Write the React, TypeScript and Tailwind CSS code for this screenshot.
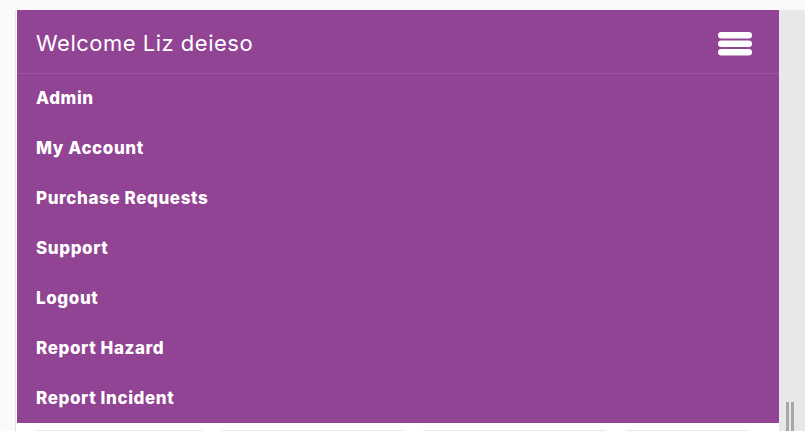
import React from "react";

const menuItems = [
  "Admin",
  "My Account",
  "Purchase Requests",
  "Support",
  "Logout",
  "Report Hazard",
  "Report Incident",
];

const BarsIcon = () => (
  <svg width="34" height="24" viewBox="0 0 34 24" fill="#ffffff">
    <rect x="0" y="0" width="34" height="6.5" rx="3.25" />
    <rect x="0" y="8.5" width="34" height="6.5" rx="3.25" />
    <rect x="0" y="17" width="34" height="6.5" rx="3.25" />
  </svg>
);

const App = () => {
  return (
    <div
      className="flex h-[431px] w-full overflow-hidden bg-[#fafafa] pt-[10px] pl-[15px]"
      style={{ fontFamily: "Inter, 'Noto Sans', sans-serif" }}
    >
      <div className="flex flex-1 flex-col border-l border-[#e2e2e2] bg-white pl-px">
        <nav className="bg-[#914394] text-white">
          <div className="flex h-[64px] items-center justify-between border-b border-[#9c55a0] pl-[19px] pr-[27px]">
            <h1 className="mt-[3px] text-[22px] font-normal tracking-[0.5px]">Welcome Liz deieso</h1>
            <button className="mt-[4px]">
              <BarsIcon />
            </button>
          </div>
          <ul>
            {menuItems.map((item) => (
              <li
                key={item}
                className="flex h-[49.9px] items-center pl-[19px] text-[17px] font-extrabold tracking-[0.6px]"
              >
                {item}
              </li>
            ))}
          </ul>
        </nav>
        <div className="flex gap-4 pt-[7px] pl-[16px]">
          <div className="h-10 w-[171px] rounded border-t border-[#e5e7eb]"></div>
          <div className="h-10 w-[186px] rounded border-t border-[#e5e7eb]"></div>
          <div className="h-10 w-[186px] rounded border-t border-[#e5e7eb]"></div>
          <div className="h-10 w-[127px] rounded border-t border-[#e5e7eb]"></div>
        </div>
      </div>
      <div className="relative w-[26px] bg-[#e8e8e8]">
        <div className="absolute bottom-0 left-[7px] flex h-[29px] gap-[2px]">
          <div className="w-[3px] bg-[#a8a8a8]"></div>
          <div className="w-[3px] bg-[#a8a8a8]"></div>
        </div>
      </div>
    </div>
  );
};

export default App;
